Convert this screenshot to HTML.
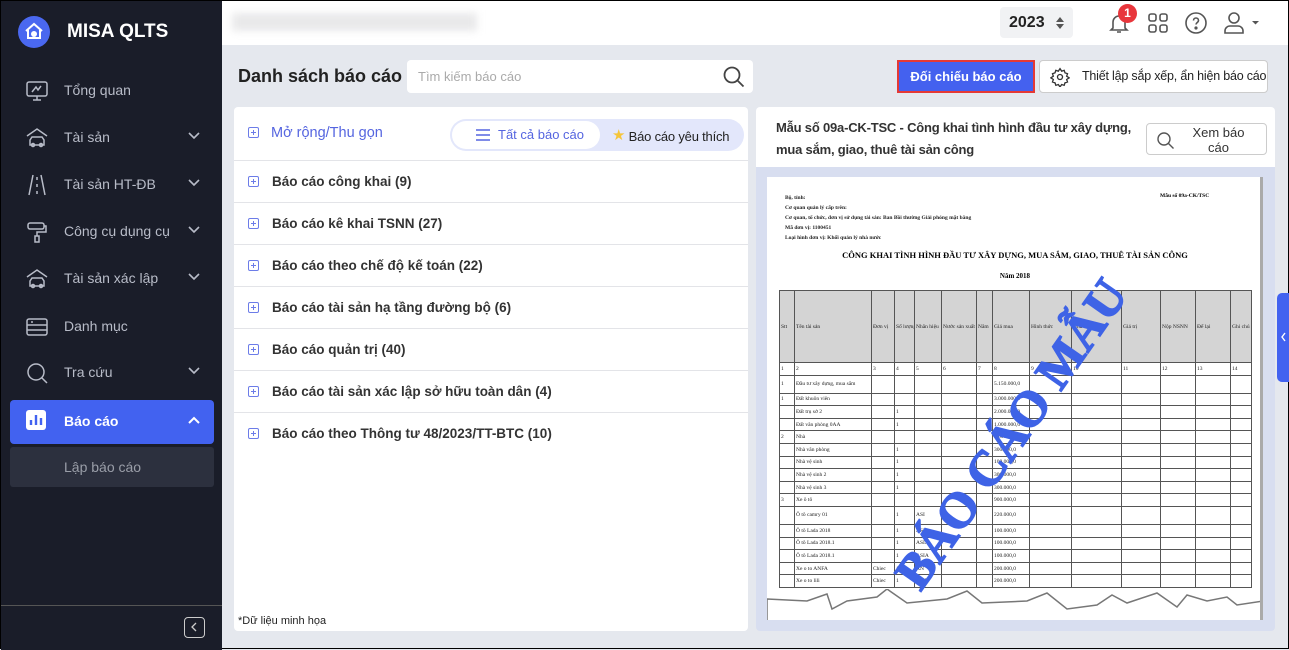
<!DOCTYPE html>
<html><head><meta charset="utf-8"><style>
*{box-sizing:border-box;margin:0;padding:0}
body{width:1289px;height:649px;overflow:hidden;font-family:"Liberation Sans",sans-serif;background:#e5e8ee;position:relative;border:1px solid #000}
.sb{position:absolute;left:0;top:0;width:221px;height:649px;background:#1a1d29}
.logo{position:absolute;left:17px;top:15px;width:32px;height:32px;border-radius:50%;background:#4a68f0}
.brand{position:absolute;left:66px;top:20px;color:#fff;font-weight:bold;font-size:19px}
.mi{position:absolute;left:0;width:221px;height:44px;color:#b8bcc8;font-size:14px}
.mi .t{position:absolute;left:63px;top:13px}
.mi svg.ic{position:absolute;left:24px;top:10px}
.mi .ch{position:absolute;left:186px;top:15px}
.act{left:9px;width:204px;background:#4262f0;border-radius:4px;color:#fff;font-weight:bold}
.sub{position:absolute;left:9px;top:446px;width:204px;height:40px;background:#2c303e;border-radius:3px;color:#9a9ea8;font-size:14px}
.hd{position:absolute;left:221px;top:0;right:0;height:44px;background:#fff}
.card{position:absolute;background:#fff;border-radius:4px}
.row{position:absolute;left:0;right:0;height:42px;border-top:1px solid #e3e4e8;font-size:13.5px;font-weight:bold;color:#333}
.row .t{position:absolute;left:38px;top:13px}
.pl{position:absolute;left:14px;top:15px;width:11px;height:11px;border:1.3px solid #6c7ce8;border-radius:2px}
.pl:before{content:"";position:absolute;left:2px;top:3.5px;width:4.5px;height:1.2px;background:#6c7ce8}
.pl:after{content:"";position:absolute;left:4.1px;top:1.5px;width:1.2px;height:5px;background:#6c7ce8}
table{border-collapse:collapse;table-layout:fixed;font-family:"Liberation Serif",serif;font-size:5.5px;color:#222}
td{border:1px solid #555;height:12.6px;padding:0 1px;overflow:hidden;white-space:nowrap}
</style></head><body>
<div class="sb">
<div class="logo"><svg width="32" height="32" viewBox="0 0 32 32"><path d="M8 15 L16 8 L24 15 M10 14 V22 H22 V14" fill="none" stroke="#fff" stroke-width="2"/><circle cx="16" cy="18" r="3" fill="#fff"/></svg></div>
<div class="brand">MISA QLTS</div>
<div class="mi" style="top:68px"><svg class="ic" width="24" height="24" viewBox="0 0 24 24" fill="none" stroke="#b8bcc8" stroke-width="1.5"><rect x="2" y="3" width="20" height="14" rx="2"/><path d="M7 13l4-5 2 3 3-4M12 17v4M8 21h8"/></svg><span class="t">Tổng quan</span></div>
<div class="mi" style="top:115px"><svg class="ic" width="24" height="24" viewBox="0 0 24 24" fill="none" stroke="#b8bcc8" stroke-width="1.5"><path d="M2 10L12 3l10 7M5 14l2-3h10l2 3v5H5z"/><circle cx="8" cy="19" r="1.5"/><circle cx="16" cy="19" r="1.5"/></svg><span class="t">Tài sản</span><svg class="ch" width="14" height="10"><path d="M2 2l5 5 5-5" stroke="#b8bcc8" fill="none" stroke-width="1.6"/></svg></div>
<div class="mi" style="top:162px"><svg class="ic" width="24" height="24" viewBox="0 0 24 24" fill="none" stroke="#b8bcc8" stroke-width="1.5"><path d="M8 2L4 22M16 2l4 20M12 4v3M12 11v3M12 18v3"/></svg><span class="t">Tài sản HT-ĐB</span><svg class="ch" width="14" height="10"><path d="M2 2l5 5 5-5" stroke="#b8bcc8" fill="none" stroke-width="1.6"/></svg></div>
<div class="mi" style="top:209px"><svg class="ic" width="24" height="24" viewBox="0 0 24 24" fill="none" stroke="#b8bcc8" stroke-width="1.5"><rect x="3" y="3" width="16" height="6" rx="2"/><path d="M19 6h2v6h-9v4M10 16h4v6h-4z"/></svg><span class="t">Công cụ dụng cụ</span><svg class="ch" width="14" height="10"><path d="M2 2l5 5 5-5" stroke="#b8bcc8" fill="none" stroke-width="1.6"/></svg></div>
<div class="mi" style="top:256px"><svg class="ic" width="24" height="24" viewBox="0 0 24 24" fill="none" stroke="#b8bcc8" stroke-width="1.5"><path d="M2 10L12 3l10 7M5 14l2-3h10l2 3v5H5z"/><circle cx="8" cy="19" r="1.5"/><circle cx="16" cy="19" r="1.5"/></svg><span class="t">Tài sản xác lập</span><svg class="ch" width="14" height="10"><path d="M2 2l5 5 5-5" stroke="#b8bcc8" fill="none" stroke-width="1.6"/></svg></div>
<div class="mi" style="top:304px"><svg class="ic" width="24" height="24" viewBox="0 0 24 24" fill="none" stroke="#b8bcc8" stroke-width="1.5"><rect x="2" y="4" width="20" height="16" rx="2"/><path d="M2 10h20M2 15h20M6 7h2"/></svg><span class="t">Danh mục</span></div>
<div class="mi" style="top:350px"><svg class="ic" width="24" height="24" viewBox="0 0 24 24" fill="none" stroke="#b8bcc8" stroke-width="1.5"><circle cx="11" cy="11" r="8"/><path d="M17 17l5 5"/></svg><span class="t">Tra cứu</span><svg class="ch" width="14" height="10"><path d="M2 2l5 5 5-5" stroke="#b8bcc8" fill="none" stroke-width="1.6"/></svg></div>
<div class="mi act" style="top:399px"><svg class="ic" style="left:16px" width="20" height="20" viewBox="0 0 20 20"><rect width="20" height="20" rx="3" fill="#fff"/><path d="M5 15V10M10 15V5M15 15V8" stroke="#4262f0" stroke-width="2.4"/></svg><span class="t" style="left:54px">Báo cáo</span><svg class="ch" style="left:177px" width="14" height="10"><path d="M2 8l5-5 5 5" stroke="#fff" fill="none" stroke-width="2"/></svg></div>
<div class="sub"><span style="position:absolute;left:54px;top:12px">Lập báo cáo</span></div>
<div style="position:absolute;left:0;top:604px;width:221px;height:1px;background:#555"></div>
<div style="position:absolute;left:183px;top:616px;width:21px;height:21px;border:1.3px solid #ccc;border-radius:4px"><svg width="18" height="18"><path d="M11 5l-4 4 4 4" stroke="#ccc" fill="none" stroke-width="1.3"/></svg></div>
</div>
<div class="hd">
<div style="position:absolute;left:10px;top:12px;width:245px;height:18px;background:#e9e9ea;filter:blur(4px)"></div>
<div style="position:absolute;left:778px;top:6px;width:73px;height:31px;background:#f1f2f4;border-radius:4px;font-weight:bold;font-size:16px;color:#222;padding:7px 0 0 9px">2023<svg style="position:absolute;left:56px;top:10px" width="8" height="12"><path d="M0 5L4 0L8 5ZM0 7L4 12L8 7Z" fill="#555"/></svg></div>
<svg style="position:absolute;left:885px;top:10px" width="24" height="24" viewBox="0 0 24 24" fill="none" stroke="#555" stroke-width="1.6"><path d="M6 17V11a6 6 0 0112 0v6l2 2H4zM10 21h4"/></svg>
<div style="position:absolute;left:896px;top:3px;width:19px;height:19px;border-radius:50%;background:#e8363c;color:#fff;font-size:12px;font-weight:bold;text-align:center;line-height:19px">1</div>
<svg style="position:absolute;left:925px;top:11px" width="22" height="22" viewBox="0 0 22 22" fill="none" stroke="#555" stroke-width="1.6"><rect x="2" y="2" width="7" height="7" rx="2"/><rect x="13" y="2" width="7" height="7" rx="2"/><rect x="2" y="13" width="7" height="7" rx="2"/><rect x="13" y="13" width="7" height="7" rx="2"/></svg>
<svg style="position:absolute;left:962px;top:10px" width="24" height="24" viewBox="0 0 24 24" fill="none" stroke="#555" stroke-width="1.6"><circle cx="12" cy="12" r="10"/><path d="M9.5 9.5a2.5 2.5 0 115 0c0 2-2.5 2-2.5 4"/><circle cx="12" cy="17" r=".8" fill="#555"/></svg>
<svg style="position:absolute;left:1000px;top:10px" width="40" height="24" viewBox="0 0 40 24" fill="none" stroke="#555" stroke-width="1.6"><circle cx="12" cy="7" r="5"/><path d="M3 22v-2a5 5 0 015-5h8a5 5 0 015 5v2z"/><path d="M30 10h7l-3.5 3.5z" fill="#555" stroke="none"/></svg>
</div>
<div style="position:absolute;left:237px;top:65px;font-size:18px;font-weight:bold;color:#222">Danh sách báo cáo</div>
<div style="position:absolute;left:406px;top:59px;width:346px;height:33px;background:#fff;border-radius:4px;font-size:13px;color:#aaa;padding:9px 0 0 11px">Tìm kiếm báo cáo<svg style="position:absolute;right:8px;top:6px" width="22" height="22" fill="none" stroke="#444" stroke-width="1.8"><circle cx="9" cy="9" r="7.5"/><path d="M14.5 14.5l6 6"/></svg></div>
<div style="position:absolute;left:896px;top:59px;width:138px;height:33px;background:#4461ef;border:2px solid #e53935;color:#fff;font-size:13px;font-weight:bold;text-align:center;line-height:29px">Đối chiếu báo cáo</div>
<div style="position:absolute;left:1038px;top:59px;width:229px;height:33px;background:#fff;border:1px solid #ccc;border-radius:4px;font-size:12.5px;color:#222;padding:8px 0 0 42px;white-space:nowrap;letter-spacing:-0.2px"><svg style="position:absolute;left:10px;top:6px" width="20" height="20" viewBox="0 0 24 24" fill="none" stroke="#333" stroke-width="1.6"><circle cx="12" cy="12" r="3"/><path d="M12 2l2 3 3-1 1 3 3 1-1 3 3 2-3 2 1 3-3 1-1 3-3-1-2 3-2-3-3 1-1-3-3-1 1-3-3-2 3-2-1-3 3-1 1-3 3 1z"/></svg>Thiết lập sắp xếp, ẩn hiện báo cáo</div>
<div class="card" style="left:233px;top:106px;width:514px;height:524px">
<div style="position:absolute;left:14px;top:20px"><div class="pl" style="left:0;top:0"></div></div>
<div style="position:absolute;left:37px;top:18px;font-size:14.5px;color:#5565e0">Mở rộng/Thu gọn</div>
<div style="position:absolute;left:216px;top:12px;width:294px;height:32px;background:#e3e7fb;border-radius:16px">
<div style="position:absolute;left:2px;top:2px;width:148px;height:28px;background:#fff;border-radius:14px;font-size:13px;color:#5565e0;padding:6px 0 0 46px"><svg style="position:absolute;left:24px;top:8px" width="14" height="12"><path d="M0 1h14M0 6h14M0 11h14" stroke="#5565e0" stroke-width="1.4"/></svg>Tất cả báo cáo</div>
<div style="position:absolute;left:162px;top:8px;font-size:13px;color:#222;white-space:nowrap;letter-spacing:-0.2px"><span style="color:#f5c53a;font-size:15px;position:relative;top:-1px">★</span> Báo cáo yêu thích</div>
</div>
<div class="row" style="top:53px"><div class="pl"></div><span class="t">Báo cáo công khai (9)</span></div>
<div class="row" style="top:95px"><div class="pl"></div><span class="t">Báo cáo kê khai TSNN (27)</span></div>
<div class="row" style="top:137px"><div class="pl"></div><span class="t">Báo cáo theo chế độ kế toán (22)</span></div>
<div class="row" style="top:179px"><div class="pl"></div><span class="t">Báo cáo tài sản hạ tầng đường bộ (6)</span></div>
<div class="row" style="top:221px"><div class="pl"></div><span class="t">Báo cáo quản trị (40)</span></div>
<div class="row" style="top:263px"><div class="pl"></div><span class="t">Báo cáo tài sản xác lập sở hữu toàn dân (4)</span></div>
<div class="row" style="top:305px"><div class="pl"></div><span class="t">Báo cáo theo Thông tư 48/2023/TT-BTC (10)</span></div>
<div style="position:absolute;left:4px;top:508px;font-size:11px;color:#222">*Dữ liệu minh họa</div>
</div>
<div class="card" style="left:755px;top:106px;width:519px;height:524px;background:#d8def0">
<div style="position:absolute;left:0;top:0;width:519px;height:60px;background:#fff;border-radius:4px 4px 0 0"></div>
<div style="position:absolute;left:20px;top:10px;width:360px;font-size:13px;font-weight:bold;color:#333;line-height:22px;letter-spacing:-0.2px">Mẫu số 09a-CK-TSC - Công khai tình hình đầu tư xây dựng, mua sắm, giao, thuê tài sản công</div>
<div style="position:absolute;left:390px;top:16px;width:121px;height:32px;border:1px solid #ccc;border-radius:4px;font-size:13px;color:#333;text-align:center;line-height:15px;padding:1px 0 0 24px">Xem báo<br>cáo<svg style="position:absolute;left:10px;top:8px" width="18" height="18" fill="none" stroke="#555" stroke-width="1.4"><circle cx="7" cy="7" r="6"/><path d="M11.5 11.5l5 5"/></svg></div>
<div style="position:absolute;left:11px;top:70px;width:496px;height:443px;background:#fff;overflow:hidden;border-right:3px solid #aaa">
<div style="position:absolute;left:18px;top:16px;font-family:'Liberation Serif',serif;font-size:5.5px;line-height:10px;color:#222;font-weight:bold">Bộ, tỉnh:<br>Cơ quan quản lý cấp trên:<br>Cơ quan, tổ chức, đơn vị sử dụng tài sản: Ban Bồi thường Giải phóng mặt bằng<br>Mã đơn vị: 1100451<br>Loại hình đơn vị: Khối quản lý nhà nước</div>
<div style="position:absolute;left:393px;top:16px;font-family:'Liberation Serif',serif;font-size:5.5px;font-weight:bold">Mẫu số 09a-CK/TSC</div>
<div style="position:absolute;left:0;width:496px;top:73px;text-align:center;font-family:'Liberation Serif',serif;font-size:8.5px;font-weight:bold">CÔNG KHAI TÌNH HÌNH ĐẦU TƯ XÂY DỰNG, MUA SẮM, GIAO, THUÊ TÀI SẢN CÔNG</div>
<div style="position:absolute;left:0;width:496px;top:95px;text-align:center;font-family:'Liberation Serif',serif;font-size:7px;font-weight:bold">Năm 2018</div>
<table style="position:absolute;left:12px;top:113px;width:472px">
<colgroup><col style="width:15px"><col style="width:77px"><col style="width:23px"><col style="width:20px"><col style="width:27px"><col style="width:35px"><col style="width:16px"><col style="width:37px"><col style="width:42px"><col style="width:50px"><col style="width:39px"><col style="width:35px"><col style="width:35px"><col style="width:21px"></colgroup>
<tr style="background:#d4d4d4"><td style="height:72px">Stt</td><td>Tên tài sản</td><td>Đơn vị</td><td>Số lượng</td><td>Nhãn hiệu</td><td>Nước sản xuất</td><td>Năm</td><td>Giá mua</td><td>Hình thức</td><td>Nhà cung cấp</td><td>Giá trị</td><td>Nộp NSNN</td><td>Để lại</td><td>Ghi chú</td></tr>
<tr><td>1</td><td>2</td><td>3</td><td>4</td><td>5</td><td>6</td><td>7</td><td>8</td><td>9</td><td>10</td><td>11</td><td>12</td><td>13</td><td>14</td></tr>
<tr><td style="height:18px">1</td><td>Đầu tư xây dựng, mua sắm</td><td></td><td></td><td></td><td></td><td></td><td>5.150.000,0</td><td></td><td></td><td></td><td></td><td></td><td></td></tr>
<tr><td>1</td><td>Đất khuôn viên</td><td></td><td></td><td></td><td></td><td></td><td>3.000.000,0</td><td></td><td></td><td></td><td></td><td></td><td></td></tr>
<tr><td></td><td>Đất trụ sở 2</td><td></td><td>1</td><td></td><td></td><td></td><td>2.000.000,0</td><td></td><td></td><td></td><td></td><td></td><td></td></tr>
<tr><td></td><td>Đất văn phòng 0AA</td><td></td><td>1</td><td></td><td></td><td></td><td>1.000.000,0</td><td></td><td></td><td></td><td></td><td></td><td></td></tr>
<tr><td>2</td><td>Nhà</td><td></td><td></td><td></td><td></td><td></td><td>1.000.000,0</td><td></td><td></td><td></td><td></td><td></td><td></td></tr>
<tr><td></td><td>Nhà văn phòng</td><td></td><td>1</td><td></td><td></td><td></td><td>300.000,0</td><td></td><td></td><td></td><td></td><td></td><td></td></tr>
<tr><td></td><td>Nhà vệ sinh</td><td></td><td>1</td><td></td><td></td><td></td><td>100.000,0</td><td></td><td></td><td></td><td></td><td></td><td></td></tr>
<tr><td></td><td>Nhà vệ sinh 2</td><td></td><td>1</td><td></td><td></td><td></td><td>300.000,0</td><td></td><td></td><td></td><td></td><td></td><td></td></tr>
<tr><td></td><td>Nhà vệ sinh 3</td><td></td><td>1</td><td></td><td></td><td></td><td>300.000,0</td><td></td><td></td><td></td><td></td><td></td><td></td></tr>
<tr><td>3</td><td>Xe ô tô</td><td></td><td></td><td></td><td></td><td></td><td>900.000,0</td><td></td><td></td><td></td><td></td><td></td><td></td></tr>
<tr><td style="height:18px"></td><td>Ô tô camry 01</td><td></td><td>1</td><td>ASI</td><td></td><td></td><td>220.000,0</td><td></td><td></td><td></td><td></td><td></td><td></td></tr>
<tr><td></td><td>Ô tô Lada 2018</td><td></td><td>1</td><td>ASIA</td><td></td><td></td><td>100.000,0</td><td></td><td></td><td></td><td></td><td></td><td></td></tr>
<tr><td></td><td>Ô tô Lada 2018.1</td><td></td><td>1</td><td>ASIA</td><td></td><td></td><td>100.000,0</td><td></td><td></td><td></td><td></td><td></td><td></td></tr>
<tr><td></td><td>Ô tô Lada 2018.1</td><td></td><td>1</td><td>ASIA</td><td></td><td></td><td>100.000,0</td><td></td><td></td><td></td><td></td><td></td><td></td></tr>
<tr><td></td><td>Xe o to ANFA</td><td>Chiec</td><td>1</td><td>AN</td><td></td><td></td><td>200.000,0</td><td></td><td></td><td></td><td></td><td></td><td></td></tr>
<tr><td></td><td>Xe o to lili</td><td>Chiec</td><td>1</td><td>LILI</td><td></td><td></td><td>200.000,0</td><td></td><td></td><td></td><td></td><td></td><td></td></tr>
</table>
<svg style="position:absolute;left:0;top:412px" width="496" height="40"><path d="M0 10 L40 12 L60 5 L65 20 L80 12 L110 8 L120 0 L140 14 L180 10 L200 2 L215 14 L260 12 L280 4 L300 20 L330 16 L345 6 L360 14 L390 4 L410 18 L420 6 L440 12 L460 8 L470 16 L496 12 V40 H0Z" fill="#fff" stroke="#777" stroke-width="1.5"/></svg>
<div style="position:absolute;left:160px;top:370px;height:50px;line-height:50px;transform:rotate(-55deg);transform-origin:left bottom;font-family:'Liberation Serif',serif;font-weight:bold;font-size:50px;color:#3e63e6;white-space:nowrap;-webkit-text-stroke:1.5px #3e63e6">BÁO CÁO MẪU</div>
</div>
</div>
<div style="position:absolute;left:1276px;top:292px;width:13px;height:89px;background:#4262f0;border-radius:5px 0 0 5px"><svg width="12" height="89"><path d="M8 40l-3 4 3 4" stroke="#fff" fill="none" stroke-width="1.4"/></svg></div>
</body></html>
